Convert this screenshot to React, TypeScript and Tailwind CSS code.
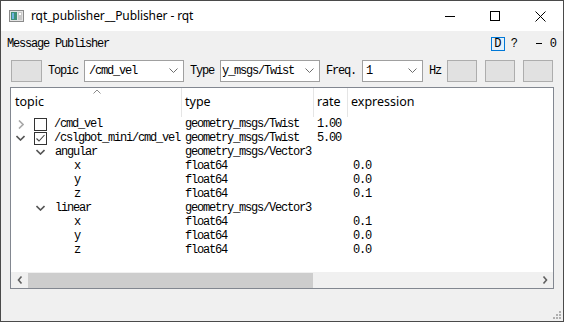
import React from "react";

const mono = "font-['Liberation_Mono',monospace] text-[12px] tracking-[-1.2px] leading-none text-black";
const sans = "font-['Noto_Sans',sans-serif]";

function Chevron({ className = "" }: { className?: string }) {
  return (
    <svg width="9" height="6" viewBox="0 0 9 6" className={className}>
      <polyline points="0.5,0.5 4.5,4.5 8.5,0.5" fill="none" stroke="#6d6d6d" strokeWidth="1" />
    </svg>
  );
}

function Combo({ text, w, pl }: { text: string; w: string; pl: string }) {
  return (
    <div className={`${w} h-[22px] border border-[#a0a0a0] bg-white flex items-center overflow-hidden`}>
      <span className={`${mono} ${pl} flex-1 whitespace-nowrap overflow-hidden`}>{text}</span>
      <Chevron className="mr-[5px] shrink-0" />
    </div>
  );
}

function Btn({ w = "w-[30px]", ml }: { w?: string; ml: string }) {
  return <div className={`${w} ${ml} h-[22px] border border-[#adadad] bg-[#e1e1e1] shrink-0`} />;
}

function ArrowRight({ color }: { color: string }) {
  return (
    <svg width="6" height="9" viewBox="0 0 6 9">
      <polyline points="1,0.5 5,4.5 1,8.5" fill="none" stroke={color} strokeWidth="1.6" />
    </svg>
  );
}
function ArrowDown({ color }: { color: string }) {
  return (
    <svg width="9" height="6" viewBox="0 0 9 6">
      <polyline points="0.5,1 4.5,5 8.5,1" fill="none" stroke={color} strokeWidth="1.6" />
    </svg>
  );
}

function Check({ checked }: { checked: boolean }) {
  return (
    <div className="w-[13px] h-[13px] border border-[#333] bg-white flex items-center justify-center">
      {checked && (
        <svg width="11" height="11" viewBox="0 0 11 11">
          <polyline points="1.5,5.5 4,8 9.5,2" fill="none" stroke="#444" strokeWidth="1.1" />
        </svg>
      )}
    </div>
  );
}

type Row = {
  level: number;
  name: string;
  type: string;
  rate?: string;
  expr?: string;
  arrow?: "right" | "down";
  check?: boolean;
};

const rows: Row[] = [
  { level: 0, name: "/cmd_vel", type: "geometry_msgs/Twist", rate: "1.00", arrow: "right", check: false },
  { level: 0, name: "/cslgbot_mini/cmd_vel", type: "geometry_msgs/Twist", rate: "5.00", arrow: "down", check: true },
  { level: 1, name: "angular", type: "geometry_msgs/Vector3", arrow: "down" },
  { level: 2, name: "x", type: "float64", expr: "0.0" },
  { level: 2, name: "y", type: "float64", expr: "0.0" },
  { level: 2, name: "z", type: "float64", expr: "0.1" },
  { level: 1, name: "linear", type: "geometry_msgs/Vector3", arrow: "down" },
  { level: 2, name: "x", type: "float64", expr: "0.1" },
  { level: 2, name: "y", type: "float64", expr: "0.0" },
  { level: 2, name: "z", type: "float64", expr: "0.0" },
];

function TopicCell({ r }: { r: Row }) {
  if (r.level === 0) {
    return (
      <div className="flex items-center h-full">
        <div className="w-[7px] shrink-0" />
        <div className="w-[6px] h-full flex items-center justify-center">
          {r.arrow === "right" ? <ArrowRight color="#a8a8a8" /> : null}
          {r.arrow === "down" ? <div className="-ml-[1px]"><ArrowDown color="#555" /></div> : null}
        </div>
        <div className="w-[10px] shrink-0" />
        <Check checked={!!r.check} />
        <div className="w-[7px] shrink-0" />
        <span className={`${mono} whitespace-nowrap`}>{r.name}</span>
      </div>
    );
  }
  if (r.level === 1) {
    return (
      <div className="flex items-center h-full">
        <div className="w-[25px] shrink-0" />
        <ArrowDown color="#555" />
        <div className="w-[10px] shrink-0" />
        <span className={`${mono} whitespace-nowrap`}>{r.name}</span>
      </div>
    );
  }
  return (
    <div className="flex items-center h-full pl-[63px]">
      <span className={`${mono} whitespace-nowrap`}>{r.name}</span>
    </div>
  );
}

export default function App() {
  return (
    <div className="relative w-[564px] h-[322px] border border-[#4a4a4a] bg-[#f0f0f0] flex flex-col overflow-hidden">
      {/* title bar */}
      <div className="h-[30px] bg-white flex items-center shrink-0">
        <svg width="15" height="12" viewBox="0 0 15 12" className="ml-[8px]">
          <rect x="0.5" y="0.5" width="14" height="11" fill="#e4e4e4" stroke="#8a8a8a" />
          <rect x="2" y="2" width="6" height="8" fill="#3f8f78" />
          <rect x="3" y="3" width="2" height="6" fill="#6fb3e0" />
          <rect x="9" y="2" width="4" height="8" fill="#c8c8c8" />
          <rect x="10" y="3" width="2" height="2" fill="#ffffff" />
        </svg>
        <span className={`${sans} text-[12px] ml-[7px] text-black tracking-[-0.1px]`}>rqt_publisher__Publisher - rqt</span>
        <div className="flex-1" />
        <div className="w-[46px] h-full flex items-center justify-center">
          <div className="w-[10px] h-[1px] bg-black ml-[3px]" />
        </div>
        <div className="w-[46px] h-full flex items-center justify-center">
          <div className="w-[10px] h-[10px] border border-black ml-[2px]" />
        </div>
        <div className="w-[46px] h-full flex items-center justify-center">
          <svg width="11" height="11" viewBox="0 0 11 11" className="ml-[1px]">
            <line x1="0.5" y1="0.5" x2="10.5" y2="10.5" stroke="#000" strokeWidth="1" />
            <line x1="10.5" y1="0.5" x2="0.5" y2="10.5" stroke="#000" strokeWidth="1" />
          </svg>
        </div>
      </div>

      {/* message publisher row */}
      <div className="h-[25px] flex items-center shrink-0">
        <span className={`${mono} ml-[6px]`}>Message Publisher</span>
        <div className="flex-1" />
        <div className="w-[14px] h-[14px] border border-[#0078d7] bg-[#e5f1fb] flex items-center justify-center">
          <span className={`${mono} tracking-normal`}>D</span>
        </div>
        <span className={`${mono} tracking-normal ml-[6px] w-[20px]`}>?</span>
        <div className="w-[6px] h-[1px] bg-black ml-[5px]" />
        <span className={`${mono} tracking-normal ml-[8px] mr-[6px]`}>0</span>
      </div>

      {/* toolbar */}
      <div className="h-[22px] mt-[4px] flex items-center shrink-0">
        <Btn w="w-[31px]" ml="ml-[10px]" />
        <span className={`${mono} ml-[6px] w-[30px] whitespace-nowrap`}>Topic</span>
        <div className="ml-[6px]">
          <Combo text="/cmd_vel" w="w-[100px]" pl="pl-[4px]" />
        </div>
        <span className={`${mono} ml-[6px] w-[24px] whitespace-nowrap`}>Type</span>
        <div className="ml-[6px]">
          <Combo text="y_msgs/Twist" w="w-[100px]" pl="pl-[1px]" />
        </div>
        <span className={`${mono} ml-[6px] w-[30px] whitespace-nowrap`}>Freq.</span>
        <div className="ml-[6px]">
          <Combo text="1" w="w-[61px]" pl="pl-[3px]" />
        </div>
        <span className={`${mono} ml-[6px] w-[12px] whitespace-nowrap`}>Hz</span>
        <Btn ml="ml-[6px]" />
        <Btn ml="ml-[8px]" />
        <Btn ml="ml-[8px]" />
      </div>

      {/* tree */}
      <div className="ml-[9px] mt-[5px] w-[544px] h-[202px] border border-[#828790] bg-white flex flex-col shrink-0">
        <div className="h-[29px] flex shrink-0 relative">
          <div className="w-[171px] border-r border-[#e5e5e5] flex items-center pl-[4px] relative">
            <span className={`${sans} text-[12.5px] text-black`}>topic</span>
            <svg width="8" height="5" viewBox="0 0 8 5" className="absolute left-[82px] top-[1px]">
              <polyline points="0.5,4.5 4,1 7.5,4.5" fill="none" stroke="#8a8a8a" strokeWidth="1" />
            </svg>
          </div>
          <div className="w-[132px] border-r border-[#e5e5e5] flex items-center pl-[3px]">
            <span className={`${sans} text-[12.5px] text-black`}>type</span>
          </div>
          <div className="w-[34px] border-r border-[#e5e5e5] flex items-center pl-[3px]">
            <span className={`${sans} text-[12.5px] text-black`}>rate</span>
          </div>
          <div className="flex-1 flex items-center pl-[3px]">
            <span className={`${sans} text-[12.5px] text-black`}>expression</span>
          </div>
        </div>
        <div className="flex-1 flex flex-col">
          {rows.map((r, i) => (
            <div key={i} className="h-[14px] flex shrink-0">
              <div className="w-[171px]">
                <TopicCell r={r} />
              </div>
              <div className="w-[132px] flex items-center pl-[3px]">
                <span className={`${mono} whitespace-nowrap`}>{r.type}</span>
              </div>
              <div className="w-[34px] flex items-center pl-[3px]">
                <span className={`${mono} whitespace-nowrap`}>{r.rate ?? ""}</span>
              </div>
              <div className="flex-1 flex items-center pl-[5px]">
                <span className={`${mono} whitespace-nowrap`}>{r.expr ?? ""}</span>
              </div>
            </div>
          ))}
        </div>
        {/* horizontal scrollbar */}
        <div className="h-[16px] bg-[#f0f0f0] flex items-center shrink-0">
          <div className="w-[17px] h-full flex items-center justify-center">
            <svg width="6" height="8" viewBox="0 0 6 8">
              <polyline points="4.5,0.5 1.5,4 4.5,7.5" fill="none" stroke="#606060" strokeWidth="1.6" />
            </svg>
          </div>
          <div className="w-[285px] h-[15px] bg-[#cdcdcd]" />
          <div className="flex-1" />
          <div className="w-[17px] h-full flex items-center justify-center">
            <svg width="6" height="8" viewBox="0 0 6 8">
              <polyline points="1.5,0.5 4.5,4 1.5,7.5" fill="none" stroke="#606060" strokeWidth="1.6" />
            </svg>
          </div>
        </div>
      </div>

      {/* resize grip */}
      <svg width="10" height="10" viewBox="0 0 10 10" className="absolute right-[1px] bottom-[1px]">
        <rect x="7" y="1" width="2" height="2" fill="#b0b0b0" />
        <rect x="4" y="4" width="2" height="2" fill="#b0b0b0" />
        <rect x="7" y="4" width="2" height="2" fill="#b0b0b0" />
        <rect x="1" y="7" width="2" height="2" fill="#b0b0b0" />
        <rect x="4" y="7" width="2" height="2" fill="#b0b0b0" />
        <rect x="7" y="7" width="2" height="2" fill="#b0b0b0" />
      </svg>
    </div>
  );
}
